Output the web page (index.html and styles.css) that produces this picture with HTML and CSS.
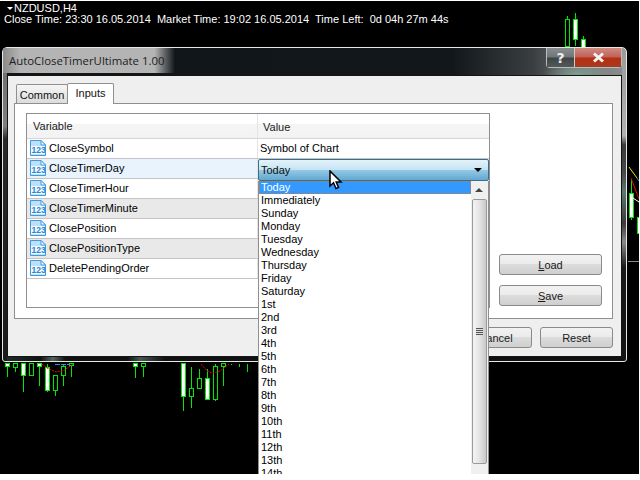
FILE: index.html
```html
<!DOCTYPE html>
<html lang="en">
<head>
    <meta charset="UTF-8">
    <meta name="viewport" content="width=device-width, initial-scale=1.0">
    <title>AutoCloseTimerUltimate 1.00</title>
    <link rel="stylesheet" href="styles.css">
</head>
<body>
    <!-- Chart behind the dialog -->
    <div class="chart">
        <svg class="candles" width="639" height="474" viewBox="0 0 639 474">
            <g fill="none" stroke="#00e800" shape-rendering="crispEdges">
                <path d="M567.5 16V46M575.5 13V46M583.5 36V46"/>
                <rect x="565.5" y="19.5" width="4" height="27" fill="#000"/>
                <rect x="573.5" y="19.5" width="4" height="20" fill="#fff"/>
                <rect x="581.5" y="39.5" width="4" height="8" fill="#fff"/>
                <path d="M7.5 364V377M15.5 364V372M23.5 364V392M31.5 364V375M39.5 364V386M47.5 364V392M55.5 375V396M63.5 364V386M71.5 364V377"/>
                <path d="M135.5 364V378M143.5 364V377M183.5 364V411M191.5 367V408M199.5 369V389M207.5 369V399M215.5 364V401M223.5 364V386M231.5 364V365M239.5 364V367M247.5 364V372"/>
                <rect x="5.5" y="363.5" width="4" height="3" fill="#fff"/>
                <rect x="13.5" y="363.5" width="4" height="4" fill="#000"/>
                <rect x="21.5" y="363.5" width="4" height="12" fill="#fff"/>
                <rect x="29.5" y="363.5" width="4" height="12" fill="#000"/>
                <rect x="37.5" y="363.5" width="4" height="3" fill="#fff"/>
                <rect x="45.5" y="367.5" width="4" height="23" fill="#fff"/>
                <rect x="53.5" y="375.5" width="4" height="15" fill="#000"/>
                <rect x="61.5" y="366.5" width="4" height="9" fill="#000"/>
                <rect x="69.5" y="363.5" width="4" height="2" fill="#000"/>
                <rect x="133.5" y="363.5" width="4" height="3" fill="#fff"/>
                <rect x="141.5" y="363.5" width="4" height="3" fill="#000"/>
                <rect x="181.5" y="363.5" width="4" height="33" fill="#fff"/>
                <rect x="189.5" y="388.5" width="4" height="8" fill="#000"/>
                <rect x="197.5" y="378.5" width="4" height="10" fill="#000"/>
                <rect x="205.5" y="378.5" width="4" height="21" fill="#fff"/>
                <rect x="213.5" y="366.5" width="4" height="33" fill="#000"/>
                <rect x="221.5" y="363.5" width="4" height="3" fill="#000"/>
                <path d="M631.5 179V220"/>
                <rect x="629.5" y="193.5" width="4" height="24" fill="#fff"/>
                <rect x="637.5" y="217.5" width="4" height="16" fill="#fff"/>
            </g>
            <path d="M55 364.5H70" stroke="#2090ff" stroke-dasharray="5 1" fill="none"/>
            <path d="M42 364L47 368L56 372L63 371L73 364" stroke="#f00000" stroke-dasharray="2 1" fill="none"/>
            <path d="M201 364L207 371L213 373L220 371L229 364" stroke="#f00000" stroke-dasharray="2 1" fill="none"/>
            <path d="M629 167L637 178" stroke="#f0e000" fill="none"/>
            <path d="M637 178L639 181" stroke="#2090ff" fill="none"/>
            <path d="M631 178L639 199" stroke="#f00000" fill="none"/>
            <path d="M633 198L639 202" stroke="#fff" fill="none"/>
            <path d="M628 261.5H639" stroke="#8a8a8a" fill="none"/>
        </svg>
        <div class="chart-head">
            <div class="symbol-line"><span class="symbol-arrow"></span>NZDUSD,H4</div>
            <div class="timer-line">Close Time: 23:30 16.05.2014&nbsp; Market Time: 19:02 16.05.2014&nbsp; Time Left:&nbsp; 0d 04h 27m 44s</div>
        </div>
    </div>

    <!-- Properties dialog -->
    <div class="window">
        <div class="title-bar">
            <span class="title-text">AutoCloseTimerUltimate 1.00</span>
            <div class="caption-btns">
                <div class="caption-btn help">?</div>
                <div class="caption-btn close">
                    <svg width="13" height="11" viewBox="0 0 13 11"><path d="M2 1.5L11 9.5M11 1.5L2 9.5" stroke="#f4f4f4" stroke-width="3" fill="none"/></svg>
                </div>
            </div>
        </div>
        <div class="client">
            <div class="tabs">
                <div class="tab">Common</div>
                <div class="tab active">Inputs</div>
            </div>
            <div class="tab-panel">
                <div class="inputs-list">
                    <div class="list-head">
                        <div class="col-var">Variable</div>
                        <div class="col-val">Value</div>
                    </div>
                    <div class="row">
                        <div class="col-var"><svg class="icon-123" width="16" height="17"><use href="#ic123"/></svg>CloseSymbol</div>
                        <div class="col-val">Symbol of Chart</div>
                    </div>
                    <div class="row selected">
                        <div class="col-var"><svg class="icon-123" width="16" height="17"><use href="#ic123"/></svg>CloseTimerDay</div>
                        <div class="col-val"></div>
                    </div>
                    <div class="row">
                        <div class="col-var"><svg class="icon-123" width="16" height="17"><use href="#ic123"/></svg>CloseTimerHour</div>
                        <div class="col-val"></div>
                    </div>
                    <div class="row shaded">
                        <div class="col-var"><svg class="icon-123" width="16" height="17"><use href="#ic123"/></svg>CloseTimerMinute</div>
                        <div class="col-val"></div>
                    </div>
                    <div class="row">
                        <div class="col-var"><svg class="icon-123" width="16" height="17"><use href="#ic123"/></svg>ClosePosition</div>
                        <div class="col-val"></div>
                    </div>
                    <div class="row shaded">
                        <div class="col-var"><svg class="icon-123" width="16" height="17"><use href="#ic123"/></svg>ClosePositionType</div>
                        <div class="col-val"></div>
                    </div>
                    <div class="row">
                        <div class="col-var"><svg class="icon-123" width="16" height="17"><use href="#ic123"/></svg>DeletePendingOrder</div>
                        <div class="col-val"></div>
                    </div>
                </div>
                <div class="side-btns">
                    <div class="btn side"><u>L</u>oad</div>
                    <div class="btn side"><u>S</u>ave</div>
                </div>
            </div>
            <div class="bottom-btns">
                <div class="btn wide">Cancel</div>
                <div class="btn wide">Reset</div>
            </div>
        </div>
    </div>

    <!-- Open combo box -->
    <div class="combo">
        <span>Today</span>
        <span class="combo-arrow"></span>
    </div>
    <div class="dropdown">
        <div class="options">
            <div class="option current">Today</div>
            <div class="option">Immediately</div>
            <div class="option">Sunday</div>
            <div class="option">Monday</div>
            <div class="option">Tuesday</div>
            <div class="option">Wednesday</div>
            <div class="option">Thursday</div>
            <div class="option">Friday</div>
            <div class="option">Saturday</div>
            <div class="option">1st</div>
            <div class="option">2nd</div>
            <div class="option">3rd</div>
            <div class="option">4th</div>
            <div class="option">5th</div>
            <div class="option">6th</div>
            <div class="option">7th</div>
            <div class="option">8th</div>
            <div class="option">9th</div>
            <div class="option">10th</div>
            <div class="option">11th</div>
            <div class="option">12th</div>
            <div class="option">13th</div>
            <div class="option">14th</div>
        </div>
        <div class="scrollbar">
            <div class="scroll-up"></div>
            <div class="scroll-thumb"><span class="grip"></span></div>
        </div>
    </div>

    <svg class="cursor" width="14" height="21" viewBox="0 0 14 21">
        <path d="M1 1V16L4.5 12.8L7 18.5L9.5 17.4L7.2 12H12Z" fill="#fff" stroke="#000" stroke-width="1.5"/>
    </svg>

    <svg class="defs" width="0" height="0">
        <symbol id="ic123" viewBox="0 0 16 17">
            <path d="M.5 .5H11L15.5 5V15.5H.5Z" fill="#bfe0f8" stroke="#3d9be4"/>
            <path d="M11 .5V5H15.5Z" fill="#fff" stroke="#3d9be4"/>
            <rect x="1" y="6" width="14" height="8" fill="#f2f9fe"/>
            <text x="1.5" y="12.8" class="ic-text">123</text>
        </symbol>
    </svg>
</body>
</html>
```

FILE: styles.css
```css
html, body {
    margin: 0;
    padding: 0;
    width: 640px;
    height: 480px;
    overflow: hidden;
    background: #fff;
}

body {
    position: relative;
    font-family: "Liberation Sans", sans-serif;
    font-size: 11px;
    color: #000;
}

/* Chart */
.chart {
    position: absolute;
    left: 0;
    top: 1px;
    width: 639px;
    height: 473px;
    background: #000;
    color: #fff;
    overflow: hidden;
}

.candles {
    position: absolute;
    left: 0;
    top: -1px;
}

.chart-head {
    position: relative;
    padding: 2px 0 0 4px;
    line-height: 11px;
}

.symbol-line {
    display: flex;
    align-items: center;
    padding-left: 3px;
    gap: 1px;
}

.symbol-arrow {
    width: 0;
    height: 0;
    border-left: 3px solid transparent;
    border-right: 3px solid transparent;
    border-top: 3px solid #fff;
}

.timer-line {
    white-space: nowrap;
}

/* Dialog window, the frame is glass so each side gets its own gradient */
.window {
    position: absolute;
    left: 2px;
    top: 47px;
    width: 625px;
    height: 315px;
    box-sizing: border-box;
    border: 1px solid #e4e8e8;
    border-radius: 5px 5px 3px 3px;
    padding: 0 4px 4px;
    background:
        linear-gradient(#9a9a9a 0, #b0b0b0 28%, #3a3a3a 31%, #4a4a4a 40%, #5c7a70 46%, #3a3a3a 56%, #8a8a8a 62%, #1a1a1a 70%, #141414 100%) right / 4px 100% no-repeat,
        linear-gradient(#6a6a6a 0, #808080 25%, #2a2a2a 29%, #1a1a1a 100%) left / 4px 100% no-repeat,
        linear-gradient(90deg, #20302c 0, #111 6%, #51685f 8%, #111 10%, #111 20%, #46584f 22%, #111 26%, #111 60%, #3a4a44 64%, #111 70%, #111 100%) bottom / 100% 4px no-repeat,
        radial-gradient(ellipse 34px 14px at 574px 26px, #7f9c93, rgba(127,156,147,0)),
        linear-gradient(90deg, #101519 0, #11171b 72%, #3a3e40 85%, #7a7e7e 94%, #8a8e8e 100%);
    display: flex;
    flex-direction: column;
}

.title-bar {
    height: 27px;
    display: flex;
    justify-content: space-between;
    flex-shrink: 0;
}

.title-text {
    font-family: "Open Sans", sans-serif;
    font-size: 11.4px;
    line-height: 25px;
    margin-left: -4px;
    padding: 0 10px 0 6px;
    color: #1c2024;
    background: linear-gradient(90deg, #8a8a8a 0, #b4b4b4 10%, #b4b4b4 88%, rgba(140,140,140,0) 100%);
    height: 25px;
}

.caption-btns {
    display: flex;
    height: 19px;
    border: 1px solid #b8bcbc;
    border-top: 0;
    border-radius: 0 0 4px 4px;
}

.caption-btn {
    display: flex;
    align-items: center;
    justify-content: center;
    font-family: "DejaVu Sans", sans-serif;
    font-size: 14px;
    font-weight: bold;
    color: #eee;
}

.help {
    width: 27px;
    background: linear-gradient(#8a8d8f 0, #70757a 48%, #3d4446 52%, #525a58 100%);
    border-right: 1px solid #c8ccc8;
}

.close {
    width: 46px;
    background: linear-gradient(#cf8b80 0, #c0605a 48%, #b5300f 52%, #a83a20 100%);
}

.client {
    flex: 1;
    background: #efefef;
    border: 1px solid #151515;
    box-sizing: border-box;
    padding: 7px 8px 8px 6px;
    display: flex;
    flex-direction: column;
}

/* Tabs */
.tabs {
    display: flex;
    height: 20px;
    align-items: flex-end;
    position: relative;
    z-index: 1;
    padding-left: 2px;
}

.tab {
    height: 19px;
    width: 52px;
    box-sizing: border-box;
    border: 1px solid #8f8f93;
    border-bottom: 0;
    border-radius: 2px 2px 0 0;
    text-align: center;
    line-height: 20px;
    background: linear-gradient(#f6f6f6, #dcdcdc);
    color: #111;
}

.tab.active {
    height: 21px;
    width: 47px;
    margin-bottom: -1px;
    margin-left: -1px;
    background: #fff;
    line-height: 19px;
}

.tab-panel {
    height: 216px;
    box-sizing: border-box;
    background: #fff;
    border: 1px solid #8f8f93;
    padding: 9px 10px 10px 11px;
    display: flex;
    gap: 9px;
}

/* Inputs list */
.inputs-list {
    width: 464px;
    height: 195px;
    box-sizing: border-box;
    border: 1px solid #8f8f93;
    flex-shrink: 0;
}

.list-head, .row {
    display: flex;
}

.list-head {
    height: 25px;
    line-height: 26px;
    box-sizing: border-box;
    border-bottom: 1px solid #d5d5d9;
    background: linear-gradient(#fff 0, #fff 40%, #f5f5f5 41%, #f3f3f3 100%);
    color: #222;
}

.row {
    height: 20px;
    line-height: 19px;
    box-sizing: border-box;
    border-bottom: 1px solid #c4c4c6;
}

.row.selected {
    background: #e8f3fd;
}

.row.shaded {
    background: #e9e9e9;
}

.col-var {
    width: 231px;
    box-sizing: border-box;
    display: flex;
    padding-left: 3px;
    align-items: center;
    gap: 3px;
    border-right: 1px solid #e4e4e4;
    flex-shrink: 0;
}

.list-head .col-var {
    padding-left: 6px;
}

.col-val {
    padding-left: 2px;
}

.list-head .col-val {
    padding-left: 5px;
}

.icon-123 {
    flex-shrink: 0;
}

.ic-text {
    font-family: "Liberation Sans", sans-serif;
    font-size: 8.5px;
    font-weight: bold;
    fill: #2a86d0;
}

/* Buttons */
.btn {
    height: 21px;
    box-sizing: border-box;
    border: 1px solid #8a8a8a;
    border-radius: 3px;
    background: linear-gradient(#f2f2f2 0, #ebebeb 45%, #dcdcdc 50%, #cfcfcf 100%);
    text-align: center;
    line-height: 20px;
    color: #1a1a1a;
}

.side-btns {
    display: flex;
    flex-direction: column;
    gap: 10px;
    padding-top: 141px;
}

.side {
    width: 103px;
}

.bottom-btns {
    display: flex;
    justify-content: flex-end;
    gap: 8px;
    margin-top: 8px;
}

.wide {
    width: 73px;
}

/* Combo box */
.combo {
    position: absolute;
    left: 258px;
    top: 159px;
    width: 231px;
    height: 22px;
    box-sizing: border-box;
    border: 1px solid #3c6e88;
    border-radius: 2px;
    background: linear-gradient(#e4f3fb 0, #c4e3f3 48%, #92c8e6 52%, #62a8d0 100%);
    display: flex;
    align-items: center;
    justify-content: space-between;
    padding: 0 6px 1px 2px;
    color: #111;
}

.combo-arrow {
    width: 0;
    height: 0;
    border-left: 4px solid transparent;
    border-right: 4px solid transparent;
    border-top: 4px solid #000;
}

/* Dropdown list */
.dropdown {
    position: absolute;
    left: 258px;
    top: 181px;
    width: 231px;
    height: 293px;
    box-sizing: border-box;
    border-left: 1px solid #8f8f8f;
    border-right: 1px solid #8f8f8f;
    background: #fff;
    overflow: hidden;
    display: flex;
}

.options {
    flex: 1;
    line-height: 13px;
}

.option {
    height: 13px;
    padding-left: 2px;
    white-space: nowrap;
}

.option.current {
    background: #3399ff;
    color: #fff;
    box-sizing: border-box;
    border: 1px dotted #c87a30;
    padding-left: 1px;
    line-height: 11px;
}

.scrollbar {
    width: 17px;
    background: #f0f0f0;
    flex-shrink: 0;
    display: flex;
    flex-direction: column;
}

.scroll-up {
    height: 18px;
    flex-shrink: 0;
    position: relative;
}

.scroll-up::after {
    content: "";
    position: absolute;
    left: 4px;
    top: 7px;
    border-left: 4px solid transparent;
    border-right: 4px solid transparent;
    border-bottom: 4px solid #444;
}

.scroll-thumb {
    height: 265px;
    flex-shrink: 0;
    width: 15px;
    margin-left: 1px;
    box-sizing: border-box;
    border: 1px solid #9a9a9a;
    border-radius: 2px;
    background: linear-gradient(90deg, #f4f4f4, #e4e4e4 50%, #c8c8c8);
    position: relative;
}

.grip {
    position: absolute;
    left: 3px;
    top: 128px;
    width: 7px;
    height: 7px;
    background: repeating-linear-gradient(#555 0, #555 1px, #ddd 1px, #ddd 2px);
}

/* Mouse pointer */
.cursor {
    position: absolute;
    left: 329px;
    top: 170px;
}

.defs {
    position: absolute;
}
```
